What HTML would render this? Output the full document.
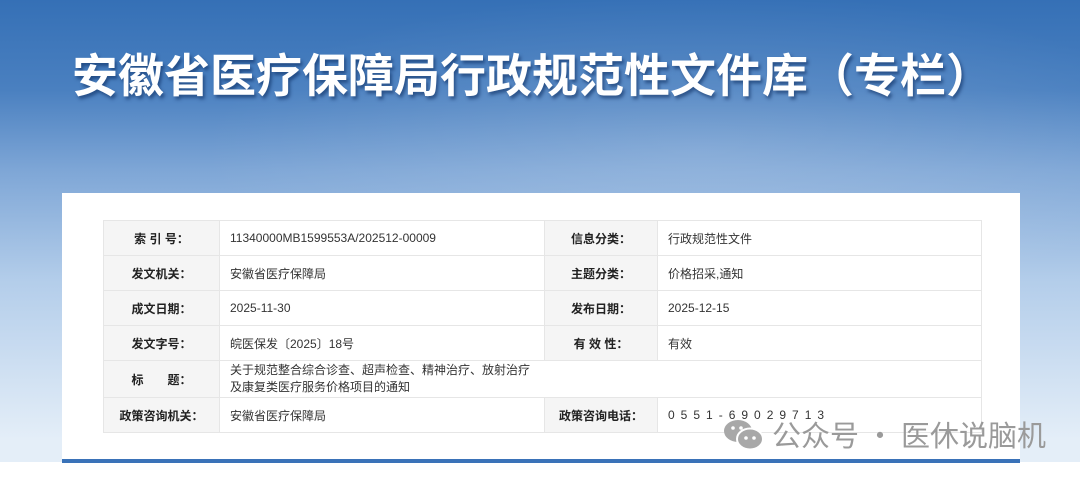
<!DOCTYPE html>
<html><head><meta charset="utf-8"><style>
body{margin:0;width:1080px;height:478px;overflow:hidden;background:#fff;font-family:"Liberation Sans","Noto Sans CJK SC",sans-serif;position:relative}
.bg{position:absolute;left:0;top:0;width:1080px;height:462px;background:linear-gradient(180deg,#3570b6 0px,#4a80c0 90px,#7ea6d6 170px,#b3cdea 280px,#e4eef8 440px)}
.bg2{position:absolute;left:0;top:0;width:1080px;height:462px;background:radial-gradient(ellipse 500px 160px at 700px 150px,rgba(255,255,255,.15),rgba(255,255,255,0))}
h1{position:absolute;left:72px;top:44px;margin:0;font-size:46px;line-height:58px;color:#fff;font-weight:bold;font-family:"Noto Sans CJK SC",sans-serif;white-space:nowrap;text-shadow:2px 3px 3px rgba(0,30,80,.5);letter-spacing:0}
.card{position:absolute;left:62px;top:193px;width:958px;height:267px;background:#fff}
.line{position:absolute;left:62px;top:459px;width:958px;height:4px;background:#3a72b8}
table{position:absolute;left:103px;top:220px;border-collapse:collapse;font-size:12px;color:#333}
td{border:1px solid #e6e6e6;height:34px;padding:0}
td.l{background:#f5f5f5;font-weight:bold;text-align:center;color:#222}
td.v{padding-left:10px}
.wm{position:absolute;left:722px;top:415px;font-size:29px;color:#9a9a9a;font-family:"Noto Sans CJK SC",sans-serif;white-space:nowrap;line-height:38px}
</style></head><body>
<div class="bg"></div><div class="bg2"></div>
<h1>安徽省医疗保障局行政规范性文件库（专栏）</h1>
<div class="card"></div>
<div class="line"></div>
<table>
<tr><td class="l" style="width:115px">索 引 号：</td><td class="v" style="width:314px">11340000MB1599553A/202512-00009</td><td class="l" style="width:112px">信息分类：</td><td class="v" style="width:313px">行政规范性文件</td></tr>
<tr><td class="l">发文机关：</td><td class="v">安徽省医疗保障局</td><td class="l">主题分类：</td><td class="v">价格招采,通知</td></tr>
<tr><td class="l">成文日期：</td><td class="v">2025-11-30</td><td class="l">发布日期：</td><td class="v">2025-12-15</td></tr>
<tr><td class="l">发文字号：</td><td class="v">皖医保发〔2025〕18号</td><td class="l">有 效 性：</td><td class="v">有效</td></tr>
<tr><td class="l" style="height:36px">标　　题：</td><td class="v" colspan="3" style="line-height:17px">关于规范整合综合诊查、超声检查、精神治疗、放射治疗<br>及康复类医疗服务价格项目的通知</td></tr>
<tr><td class="l">政策咨询机关：</td><td class="v">安徽省医疗保障局</td><td class="l">政策咨询电话：</td><td class="v" style="letter-spacing:6px">0551-69029713</td></tr>
</table>
<div class="wm"><svg width="44" height="34" viewBox="0 0 44 34" style="vertical-align:-6px;margin-right:6px"><ellipse cx="16" cy="13" rx="14" ry="11" fill="#a8a8a8"/><ellipse cx="28" cy="21" rx="13" ry="10.5" fill="#a8a8a8" stroke="#fff" stroke-width="2"/><circle cx="24" cy="20" r="1.8" fill="#fff"/><circle cx="32" cy="20" r="1.8" fill="#fff"/><circle cx="11" cy="10" r="1.8" fill="#fff"/><circle cx="19" cy="10" r="1.8" fill="#fff"/></svg>公众号 · 医休说脑机</div>
</body></html>
